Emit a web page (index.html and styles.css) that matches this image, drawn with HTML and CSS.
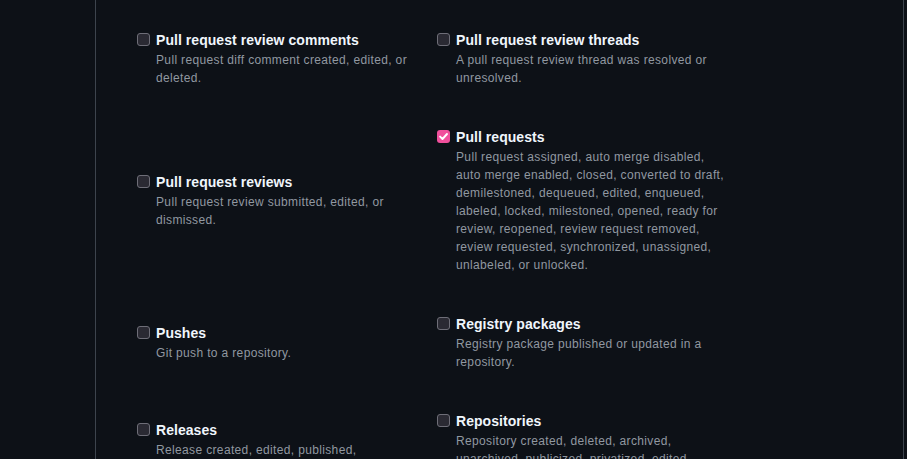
FILE: index.html
```html
<!DOCTYPE html>
<html lang="en">
<head>
<meta charset="utf-8">
<title>Webhook events</title>
<link rel="stylesheet" href="styles.css">
</head>
<body>
<div class="box">
  <div class="events">
    <label class="event">
      <span class="check"></span>
      <span class="text">
        <span class="title">Pull request review comments</span>
        <span class="desc">Pull request diff comment created, edited, or<br>deleted.</span>
      </span>
    </label>
    <label class="event">
      <span class="check"></span>
      <span class="text">
        <span class="title">Pull request review threads</span>
        <span class="desc">A pull request review thread was resolved or<br>unresolved.</span>
      </span>
    </label>
    <label class="event">
      <span class="check"></span>
      <span class="text">
        <span class="title">Pull request reviews</span>
        <span class="desc">Pull request review submitted, edited, or<br>dismissed.</span>
      </span>
    </label>
    <label class="event">
      <span class="check is-checked"><svg viewBox="0 0 13 13" width="13" height="13"><path d="M3.1 6.6 L5.5 9 L10 4" fill="none" stroke="#fff" stroke-width="1.9" stroke-linecap="round" stroke-linejoin="round"/></svg></span>
      <span class="text">
        <span class="title">Pull requests</span>
        <span class="desc">Pull request assigned, auto merge disabled,<br>auto merge enabled, closed, converted to draft,<br>demilestoned, dequeued, edited, enqueued,<br>labeled, locked, milestoned, opened, ready for<br>review, reopened, review request removed,<br>review requested, synchronized, unassigned,<br>unlabeled, or unlocked.</span>
      </span>
    </label>
    <label class="event">
      <span class="check"></span>
      <span class="text">
        <span class="title">Pushes</span>
        <span class="desc">Git push to a repository.</span>
      </span>
    </label>
    <label class="event">
      <span class="check"></span>
      <span class="text">
        <span class="title">Registry packages</span>
        <span class="desc">Registry package published or updated in a<br>repository.</span>
      </span>
    </label>
    <label class="event">
      <span class="check"></span>
      <span class="text">
        <span class="title">Releases</span>
        <span class="desc">Release created, edited, published,<br>unpublished, or deleted.</span>
      </span>
    </label>
    <label class="event">
      <span class="check"></span>
      <span class="text">
        <span class="title">Repositories</span>
        <span class="desc">Repository created, deleted, archived,<br>unarchived, publicized, privatized, edited,<br>renamed, or transferred.</span>
      </span>
    </label>
  </div>
</div>
</body>
</html>
```
FILE: styles.css
```css
html, body {
  margin: 0;
  padding: 0;
  background: #0d1117;
  overflow: hidden;
}
body {
  font-family: "Liberation Sans", Arial, sans-serif;
  color: #f0f6fc;
}
.box {
  margin-left: 95px;
  width: 766px;
  border-left: 1px solid #3d444d;
  border-right: 1px solid #3d444d;
  padding: 30px 0 40px 41px;
  min-height: 600px;
  box-sizing: content-box;
}
.events {
  display: grid;
  grid-template-columns: 300px 300px;
  row-gap: 40px;
  align-items: center;
}
.event {
  display: flex;
  align-items: flex-start;
}
.check {
  flex: none;
  width: 13px;
  height: 13px;
  margin-top: 3px;
  margin-right: 6px;
  box-sizing: border-box;
  border: 1.5px solid #6e6e78;
  border-radius: 3px;
  background: #2a2a33;
  display: flex;
}
.check.is-checked {
  border: none;
  background: #f0509c;
}
.check svg {
  display: block;
}
.text {
  display: flex;
  flex-direction: column;
}
.title {
  font-size: 14px;
  line-height: 21px;
  font-weight: 700;
  color: #f0f6fc;
  white-space: nowrap;
  letter-spacing: 0.05px;
}
.desc {
  font-size: 12px;
  line-height: 18px;
  color: #9198a1;
  white-space: nowrap;
  letter-spacing: 0.35px;
}
```
